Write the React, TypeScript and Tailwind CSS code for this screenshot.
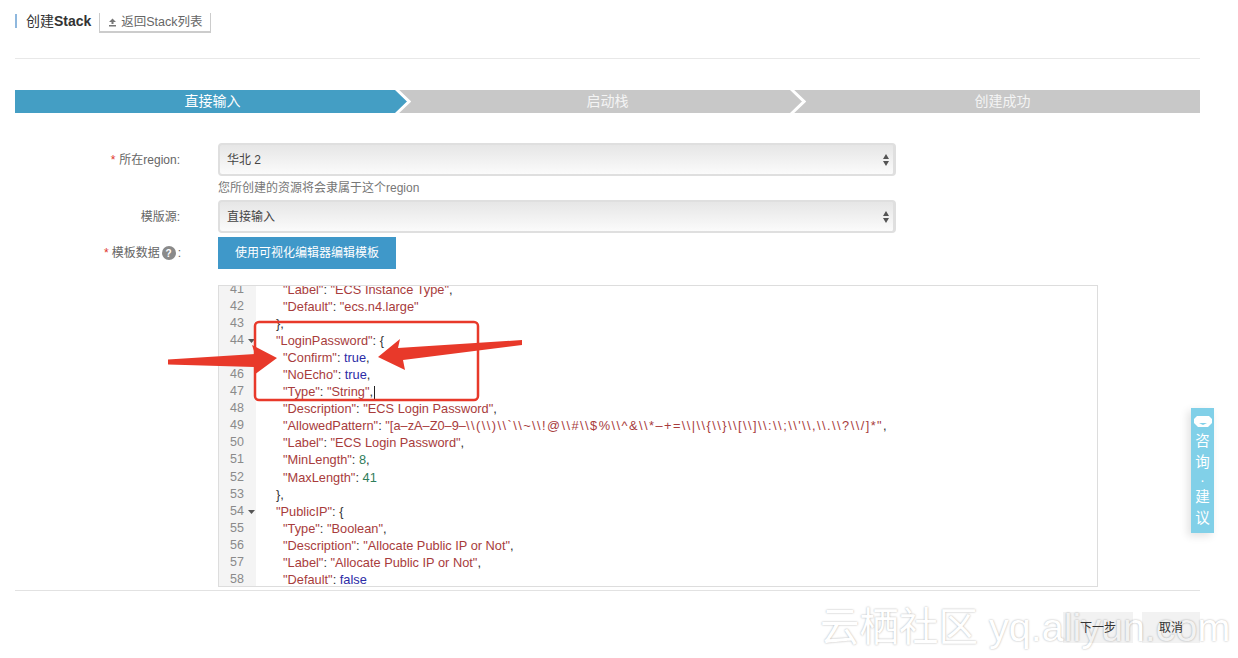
type Seg = [string, string];

const STR = "text-[#a83c3c]";
const KW = "text-[#2c2ca6]";
const NUM = "text-[#2f7d5b]";
const PUN = "text-[#333333]";
const PATTERN = "text-[#a83c3c] tracking-[1.45px]";

const kv = (indent: number, key: string, val: string, cls: string, tail = ","): { indent: number; segs: Seg[] } => ({
  indent,
  segs: [
    [`"${key}"`, STR],
    [": ", PUN],
    [val, cls],
    [tail, PUN],
  ],
});

const lines: { no: number; fold?: boolean; hideNo?: boolean; indent: number; segs: Seg[]; cursor?: boolean }[] = [
  { no: 41, ...kv(2, "Label", '"ECS Instance Type"', STR) },
  { no: 42, ...kv(2, "Default", '"ecs.n4.large"', STR, "") },
  { no: 43, indent: 1, segs: [["},", PUN]] },
  { no: 44, fold: true, indent: 1, segs: [['"LoginPassword"', STR], [": {", PUN]] },
  { no: 45, hideNo: true, ...kv(2, "Confirm", "true", KW) },
  { no: 46, ...kv(2, "NoEcho", "true", KW) },
  { no: 47, cursor: true, ...kv(2, "Type", '"String"', STR) },
  { no: 48, ...kv(2, "Description", '"ECS Login Password"', STR) },
  {
    no: 49,
    indent: 2,
    segs: [
      ['"AllowedPattern"', STR],
      [": ", PUN],
      ['"[a–zA–Z0–9–', STR],
      ['\\\\(\\\\)\\\\`\\\\~\\\\!@\\\\#\\\\$%\\\\^&\\\\*–+=\\\\|\\\\{\\\\}\\\\[\\\\]\\\\:\\\\;\\\\\'\\\\,\\\\.\\\\?\\\\/]*"', PATTERN],
      [",", PUN],
    ],
  },
  { no: 50, ...kv(2, "Label", '"ECS Login Password"', STR) },
  { no: 51, ...kv(2, "MinLength", "8", NUM) },
  { no: 52, ...kv(2, "MaxLength", "41", NUM, "") },
  { no: 53, indent: 1, segs: [["},", PUN]] },
  { no: 54, fold: true, indent: 1, segs: [['"PublicIP"', STR], [": {", PUN]] },
  { no: 55, ...kv(2, "Type", '"Boolean"', STR) },
  { no: 56, ...kv(2, "Description", '"Allocate Public IP or Not"', STR) },
  { no: 57, ...kv(2, "Label", '"Allocate Public IP or Not"', STR) },
  { no: 58, ...kv(2, "Default", "false", KW, "") },
];

function Chevron() {
  return (
    <svg className="absolute right-[-1px] top-0" width="16" height="23" viewBox="0 0 16 23">
      <path d="M1 -1 L14 11.5 L1 24" fill="none" stroke="#ffffff" strokeWidth="3" />
    </svg>
  );
}

function Steps() {
  return (
    <div className="grid h-[23px] w-[1185px] grid-cols-3 bg-[#c8c8c8] text-center text-[14px] leading-[23px] text-[#f4f4f4]">
      <div className="relative">
        <div className="bg-[#449ec4] text-white [clip-path:polygon(0_0,calc(100%-14px)_0,100%_50%,calc(100%-14px)_100%,0_100%)]">直接输入</div>
        <Chevron />
      </div>
      <div className="relative">
        启动栈
        <Chevron />
      </div>
      <div>创建成功</div>
    </div>
  );
}

function FakeSelect({ value }: { value: string }) {
  return (
    <div className="flex h-[33px] w-[678px] items-center justify-between rounded-[4px] border-2 border-r-[3px] border-[#dfdfdf] bg-gradient-to-b from-[#e6e6e6] to-[#fbfbfb] pl-[7px] pr-[4px] text-[12px] text-[#444444]">
      <span>{value}</span>
      <svg width="6" height="12" viewBox="0 0 6 12">
        <path d="M3 0 L6 5 L0 5 Z M0 7 L6 7 L3 12 Z" fill="#555555" />
      </svg>
    </div>
  );
}

function FormLabel({ required, children }: { required?: boolean; children: React.ReactNode }) {
  return (
    <div className="flex w-[203px] shrink-0 items-center justify-end pr-[38px] text-[12px] text-[#666666]">
      {required && <span className="mr-[4px] text-[#e0352b]">*</span>}
      {children}
    </div>
  );
}

function CodeEditor() {
  return (
    <div className="ml-[203px] h-[302px] w-[880px] overflow-hidden border border-[#dddddd] bg-white">
      <div className="flex h-full">
        <div className="w-[37px] shrink-0 bg-[#f4f4f4]">
          <div className="-mt-[5px]">
            {lines.map((l) => (
              <div key={l.no} className="relative h-[17.06px] pr-[12px] text-right text-[12.5px] leading-[17.06px] text-[#8a8a8a]">
                {l.hideNo ? "" : l.no}
                {l.fold && (
                  <svg className="absolute right-[1px] top-[7px]" width="7" height="4" viewBox="0 0 7 4">
                    <path d="M0 0 L7 0 L3.5 4 Z" fill="#555555" />
                  </svg>
                )}
              </div>
            ))}
          </div>
        </div>
        <div className="min-w-0 flex-1 pl-[20px]">
          <div className="-mt-[5px]">
            {lines.map((l) => (
              <div
                key={l.no}
                className={`h-[17.06px] whitespace-pre text-[12.8px] leading-[17.06px] ${l.indent === 2 ? "pl-[7px]" : ""}`}
              >
                {l.segs.map(([t, c], i) => (
                  <span key={i} className={c}>
                    {t}
                  </span>
                ))}
                {l.cursor && <span className="ml-px inline-block h-[14px] w-px bg-[#222222] align-middle" />}
              </div>
            ))}
          </div>
        </div>
      </div>
    </div>
  );
}

function Annotations() {
  return (
    <svg className="pointer-events-none absolute left-0 top-0" width="1238" height="658" viewBox="0 0 1238 658">
      <rect x="255" y="322" width="223" height="78" rx="4" fill="none" stroke="#e8392a" strokeWidth="2.5" />
      <path d="M168 359.5 L255 354 L252 345 L277 358 L254 375 L254 367 L168 364.5 Z" fill="#e8392a" strokeLinejoin="round" />
      <path d="M522 340 L398 348 L400 339 L378 357 L405 370 L403 360 L522 345 Z" fill="#e8392a" strokeLinejoin="round" />
    </svg>
  );
}

export default function App() {
  return (
    <div className="relative h-[658px] w-[1238px] overflow-hidden bg-white pl-[15px] font-['Liberation_Sans','Noto_Sans_CJK_SC',sans-serif]">
      {/* header */}
      <div className="flex h-[58px] items-start pt-[13px]">
        <div className="mt-px h-[14px] w-[2px] bg-[#8fb8de]" />
        <h1 className="ml-[9px] text-[14px] font-normal leading-[16px] text-[#333333]">
          创建<b>Stack</b>
        </h1>
        <div className="ml-[8px] flex h-[20px] w-[112px] items-center justify-center gap-[4px] border border-t-0 border-b-2 border-[#cccccc] text-[12.5px] text-[#666666]">
          <svg width="9" height="9" viewBox="0 0 9 9">
            <path d="M4.5 0.5 L8 4 H5.5 V6 H3.5 V4 H1 Z M1 7 H8 V8.5 H1 Z" fill="#777777" />
          </svg>
          返回Stack列表
        </div>
      </div>
      <div className="h-px w-[1185px] bg-[#e8e8e8]" />

      <div className="mt-[31px]">
        <Steps />
      </div>

      {/* form */}
      <div className="mt-[30px] flex flex-col">
        <div className="flex">
          <FormLabel required>所在region:</FormLabel>
          <FakeSelect value="华北 2" />
        </div>
        <div className="ml-[203px] mt-[4px] h-[20px] text-[12px] leading-[16px] text-[#777777]">您所创建的资源将会隶属于这个region</div>
        <div className="flex">
          <FormLabel>模版源:</FormLabel>
          <FakeSelect value="直接输入" />
        </div>
        <div className="mt-[4px] flex">
          <div className="flex w-[203px] shrink-0 items-center justify-end pr-[37px] text-[12px] text-[#666666]">
            <span className="mr-[3px] text-[#e0352b]">*</span>
            模板数据
            <span className="mx-[2px] flex h-[14px] w-[14px] items-center justify-center rounded-full bg-[#8a8a8a] text-[10px] font-bold text-white">?</span>
            :
          </div>
          <div className="flex h-[32px] w-[178px] items-center justify-center bg-[#3f98c9] text-[12px] text-white">
            使用可视化编辑器编辑模板
          </div>
        </div>
        <div className="mt-[16px]">
          <CodeEditor />
        </div>
      </div>

      <div className="mt-[3px] h-px w-[1185px] bg-[#e2e2e2]" />

      {/* watermark */}
      <div className="absolute left-[820px] top-[600px] whitespace-nowrap text-[39.5px] leading-[54px] text-white [text-shadow:0_0_2px_#a8a8a8]">
        云栖社区 yq.aliyun.com
      </div>

      <div className="relative z-10 mt-[21px] flex w-[1185px] justify-end gap-[9px] text-[12px] text-[#333333]">
        <div className="flex h-[31px] w-[70px] items-center justify-center bg-black/5">下一步</div>
        <div className="flex h-[31px] w-[58px] items-center justify-center bg-black/5">取消</div>
      </div>

      <Annotations />

      {/* side tab */}
      <div className="absolute left-[1191px] top-[408px] flex h-[125px] w-[23px] flex-col items-center bg-[#81d0e8] pt-[8px] text-[14.5px] leading-[21px] text-white shadow-[-3px_3px_8px_rgba(0,0,0,0.12)]">
        <svg width="18" height="11" viewBox="0 0 18 11" className="mb-[4px] shrink-0">
          <path d="M3 0 H15 L18 3 V7 L14 11 H4 L0 7 V3 Z" fill="#ffffff" />
          <path d="M5 7 H13 L9 9 Z" fill="#81d0e8" />
        </svg>
        <span>咨</span>
        <span>询</span>
        <span className="h-[14px] leading-[14px]">·</span>
        <span>建</span>
        <span>议</span>
      </div>
    </div>
  );
}
